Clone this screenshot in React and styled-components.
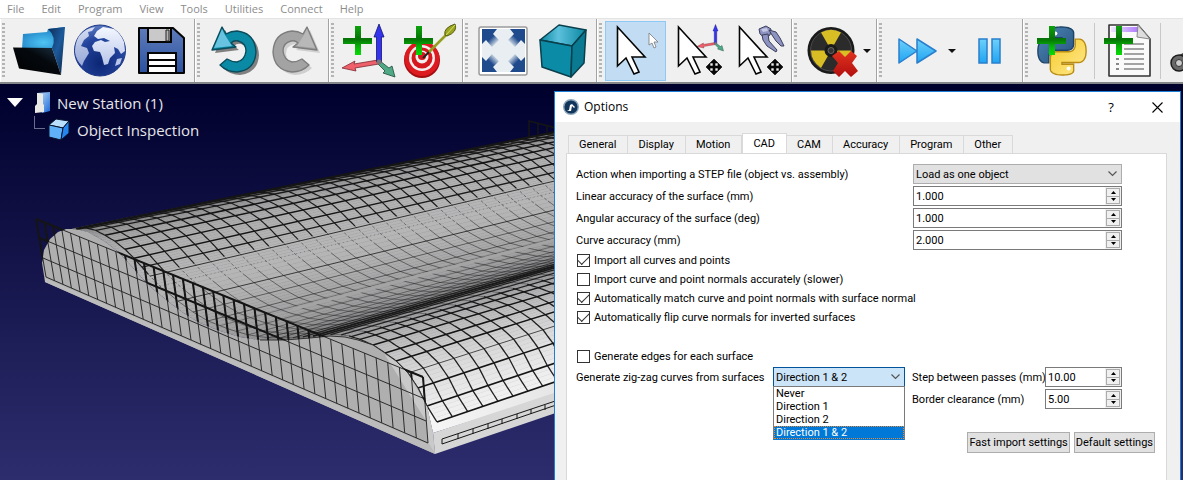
import React, { useId } from "react";
import styled, { createGlobalStyle, css } from "styled-components";

const MENU = [
  "File",
  "Edit",
  "Program",
  "View",
  "Tools",
  "Utilities",
  "Connect",
  "Help",
];

const TABS = [
  "General",
  "Display",
  "Motion",
  "CAD",
  "CAM",
  "Accuracy",
  "Program",
  "Other",
];

const DIRECTIONS = ["Never", "Direction 1", "Direction 2", "Direction 1 & 2"];

/* ---------- 3D view ---------- */

// near-end profile of the part: x, y, slope of the long edge, grey level
const PROFILE = [
  [72, 229, 0.198, 120],
  [80, 230, 0.2, 135],
  [88, 232, 0.203, 150],
  [97, 237, 0.208, 163],
  [107, 243, 0.213, 170],
  [117, 251, 0.22, 175],
  [126, 260, 0.225, 178],
  [134, 269, 0.23, 180],
  [142, 278, 0.235, 182],
  [152, 288, 0.238, 182],
  [170, 303, 0.242, 178],
  [185, 314, 0.25, 172],
  [200, 323, 0.257, 166],
  [220, 331, 0.265, 162],
  [240, 337, 0.272, 154],
  [260, 340, 0.28, 144],
  [285, 340, 0.288, 134],
  [310, 338, 0.29, 140],
  [330, 336, 0.29, 152],
  [345, 337, 0.29, 165],
  [358, 340, 0.29, 176],
  [373, 345, 0.295, 186],
  [385, 353, 0.305, 196],
  [396, 361, 0.31, 206],
  [408, 373, 0.32, 216],
  [418, 388, 0.33, 226],
  [427, 406, 0.335, 236],
  [437, 422, 0.34, 242],
];

const profileAt = (u) => {
  const i = Math.min(Math.floor(u), PROFILE.length - 2);
  const f = u - i;
  return PROFILE[i].map((a, k) => a + (PROFILE[i + 1][k] - a) * f);
};

const along = (u, d) => {
  const [x, y, s] = profileAt(u);
  return [x + d, y - s * d];
};

// the wires stop short of the edge, except on the near bump
const margin = (u) => Math.max(0, Math.min(8, (21 - u) * 2));

const toPath = (pts) =>
  "M" + pts.map(([x, y]) => `${x.toFixed(1)} ${y.toFixed(1)}`).join("L");

const LENGTH = 620;
const LAST = PROFILE.length - 1;

const STRIPS = [];
for (let u = 0; u < LAST; u += 0.25) {
  const g = Math.round(profileAt(u)[3]);
  STRIPS.push({
    d: toPath([
      along(u, 0),
      along(u, LENGTH),
      along(u + 0.25, LENGTH),
      along(u + 0.25, 0),
    ]),
    fill: `rgb(${g},${g},${g})`,
  });
}

const LONG_LINES = [
  [1, 1.4, 0.9],
  [2, 1.4, 0.95],
  [3, 1.5, 1],
  [4, 1.5, 1],
  [5, 1.4, 1],
  [6, 1.4, 1],
  [7, 1.3, 0.95],
  [8, 1, 0.8],
  [9, 1, 0.3],
  [10, 1, 0.75],
  [11, 1, 0.5],
  [12, 1, 0.5],
  [12.6, 1, 0.35],
  [13.4, 1, 0.4],
  [14, 1, 0.4],
  [14.5, 1, 0.4],
  [15, 1, 0.45],
  [15.5, 1, 0.55],
  [16, 1, 0.7],
  [16.4, 1.4, 0.85],
  [16.8, 2, 0.95],
  [17.2, 1.6, 0.95],
  [17.7, 1.2, 0.9],
  [18.4, 1.2, 0.9],
  [19.2, 1.3, 0.95],
  [20, 1.4, 1],
  [21, 1.5, 1],
  [22, 1.5, 1],
  [23, 1.5, 1],
  [24, 1, 0.7],
  [25, 1.5, 1],
  [26, 1.6, 1],
  [27, 1.6, 1],
].map(([u, w, o]) => ({
  d: toPath([along(u, margin(u)), along(u, LENGTH)]),
  w,
  o,
  dash: u === 9 ? "1 3" : undefined,
}));

const CROSS_SPANS = [
  { from: 0, to: 7.8, w: 1.2, o: 0.95 },
  { from: 7.8, to: 9.4, w: 1, o: 0.45, dash: "3 2" },
  { from: 9.4, to: 14, w: 1, o: 0.5 },
  { from: 14, to: 19, w: 1, o: 0.4 },
  { from: 19, to: 27, w: 1.3, o: 0.95 },
];

const CROSS_LINES = [];
for (let i = 0, d = 0; d < 500; i += 1, d += 15.5 - i * 0.1) {
  CROSS_SPANS.forEach((span) => {
    const pts = [];
    for (let u = span.from; u <= span.to + 0.01; u += 0.2) {
      pts.push(along(Math.min(u, LAST), d + margin(u)));
    }
    CROSS_LINES.push({ ...span, d: toPath(pts) });
  });
}

const FACE_EDGE = [[45, 282], [42, 263], [44, 250], [50, 239], [58, 232], [66, 229]].concat(
  PROFILE.slice(0, 27).map(([x, y]) => [x, y])
);
const FACE = toPath([...FACE_EDGE, [433, 433], [435, 454]]) + "Z";
const ABOVE_FACE = toPath([...FACE_EDGE, [430, 430], [440, 430], [440, 180], [20, 180], [20, 282]]) + "Z";

const FENCE = [];
for (let i = 0; i <= 38; i += 1) {
  const t = i / 38;
  const f = t * 0.83 + t * t * 0.17;
  FENCE.push(toPath([[36 + 387 * f, 219 + 158 * f], [46 + 382 * f, 277 + 166 * f]]));
}
FENCE.push("M36 219L423 377", "M40 238L425 399", "M43 258L426 421", "M46 277L428 443");

const Fence = ({ width, opacity, clip }) => (
  <g stroke="#151515" strokeWidth={width} opacity={opacity} clipPath={clip} fill="none">
    {FENCE.map((d) => (
      <path key={d} d={d} />
    ))}
  </g>
);

const PartView = () => (
  <Scene aria-hidden="true">
    <defs>
      <clipPath id="above-face">
        <path d={ABOVE_FACE} />
      </clipPath>
      <linearGradient id="bevel" x1="0" y1="0" x2="1" y2="0">
        <stop offset="0" stopColor="#f6f6f6" />
        <stop offset="1" stopColor="#dedede" />
      </linearGradient>
    </defs>
    <g transform="translate(0 -84)">
      <path d="M425 398L437 418L620 356V374L433 433Z" fill="url(#bevel)" />
      <path d="M433 433L620 371V391L435 454Z" fill="#d6d6d6" />
      {STRIPS.map((s) => (
        <path key={s.d} d={s.d} fill={s.fill} stroke={s.fill} strokeWidth="0.6" />
      ))}
      <g fill="none" stroke="#151515">
        {LONG_LINES.map((l) => (
          <path key={l.d} d={l.d} strokeWidth={l.w} opacity={l.o} strokeDasharray={l.dash} />
        ))}
        {CROSS_LINES.map((l) => (
          <path key={l.d} d={l.d} strokeWidth={l.w} opacity={l.o} strokeDasharray={l.dash} />
        ))}
        <path d="M293 309L600 228" stroke="#a4a4a4" strokeWidth="3" />
        <path d="M76 229L600 123" strokeWidth="2.4" />
        <path d="M529 136V121L560 129M538 134V123M547 132V126" strokeWidth="1.6" />
        <path d="M442 439L600 386M442 444L600 390M442 439V444M458 434V439M473 429V434M488 424V429M502 419V424M517 414V419M531 409V414M545 405V410" />
      </g>
      <path d={FACE} fill="#afafaf" />
      <path d="M385 355L396 361L408 373L427 406L433 433L435 454L428 443L426 421Z" fill="#c9c9c9" />
      <path d="M45 278L430 445L435 454L45 282Z" fill="#bcbcbc" />
      <path d={toPath(PROFILE.slice(15, 27))} fill="none" stroke="#333" />
      <Fence width={1} opacity={0.85} />
      <Fence width={2} opacity={1} clip="url(#above-face)" />
    </g>
  </Scene>
);

/* ---------- toolbar icons, drawn on a 56px box ---------- */

const Icon = ({ children }) => (
  <svg width="56" height="56" viewBox="0 0 56 56" aria-hidden="true">
    {children}
  </svg>
);

const Plus = () => (
  <path d="M15 3H21V15H32V21H21V32H15V21H3V15H15Z" fill="url(#plus)" />
);

const IconDefs = () => (
  <HiddenSvg aria-hidden="true">
    <defs>
      <linearGradient id="plus" x1="0" y1="0" x2="0" y2="1">
        <stop offset="0" stopColor="#0da30d" />
        <stop offset="0.45" stopColor="#067206" />
        <stop offset="0.7" stopColor="#08b008" />
        <stop offset="1" stopColor="#06dc06" />
      </linearGradient>
      <linearGradient id="folder-back" x1="0" y1="0" x2="1" y2="1">
        <stop offset="0" stopColor="#0c2c55" />
        <stop offset="0.5" stopColor="#1c5a9c" />
        <stop offset="1" stopColor="#0b2244" />
      </linearGradient>
      <radialGradient id="folder-page" cx="0.5" cy="0.7" r="0.7">
        <stop offset="0" stopColor="#4fc4f4" />
        <stop offset="1" stopColor="#1c7cc0" />
      </radialGradient>
      <linearGradient id="folder-front" x1="1" y1="0" x2="0" y2="1">
        <stop offset="0" stopColor="#1d3548" />
        <stop offset="0.4" stopColor="#05090e" />
        <stop offset="1" stopColor="#000" />
      </linearGradient>
      <radialGradient id="globe" cx="0.5" cy="0.75" r="0.8">
        <stop offset="0" stopColor="#0c2674" />
        <stop offset="0.6" stopColor="#24459e" />
        <stop offset="1" stopColor="#6784c9" />
      </radialGradient>
      <linearGradient id="land" x1="0" y1="0" x2="0" y2="1">
        <stop offset="0" stopColor="#f4f7ff" />
        <stop offset="1" stopColor="#b9c6ea" />
      </linearGradient>
      <linearGradient id="floppy" x1="0" y1="0" x2="0" y2="1">
        <stop offset="0" stopColor="#5f7cba" />
        <stop offset="1" stopColor="#2b52a0" />
      </linearGradient>
      <linearGradient id="fit-tail" gradientUnits="userSpaceOnUse" x1="12" y1="10" x2="23" y2="21">
        <stop offset="0" stopColor="#1f4a8c" />
        <stop offset="0.45" stopColor="#1f4a8c" />
        <stop offset="1" stopColor="#1f4a8c" stopOpacity="0" />
      </linearGradient>
      <linearGradient id="cube-top" x1="0" y1="0" x2="1" y2="0">
        <stop offset="0" stopColor="#0a87a1" />
        <stop offset="0.4" stopColor="#5cc0dc" />
        <stop offset="1" stopColor="#0a87a1" />
      </linearGradient>
      <linearGradient id="play" x1="0" y1="0" x2="0" y2="1">
        <stop offset="0" stopColor="#6fd0fa" />
        <stop offset="1" stopColor="#1ea4f2" />
      </linearGradient>
      <linearGradient id="red-x" x1="0" y1="0" x2="0" y2="1">
        <stop offset="0" stopColor="#e0331f" />
        <stop offset="1" stopColor="#b30f0f" />
      </linearGradient>
      <linearGradient id="py-blue" x1="0" y1="0" x2="1" y2="1">
        <stop offset="0" stopColor="#4d86b6" />
        <stop offset="1" stopColor="#27527d" />
      </linearGradient>
      <linearGradient id="py-yellow" x1="0" y1="0" x2="1" y2="1">
        <stop offset="0" stopColor="#ffe98f" />
        <stop offset="1" stopColor="#f6cb2c" />
      </linearGradient>
      <linearGradient id="door" x1="0" y1="0" x2="1" y2="1">
        <stop offset="0" stopColor="#c9e5fb" />
        <stop offset="1" stopColor="#1b68d8" />
      </linearGradient>
      <linearGradient id="doc-head" x1="0" y1="0" x2="1" y2="0">
        <stop offset="0" stopColor="#efe6ff" />
        <stop offset="1" stopColor="#b07bff" />
      </linearGradient>
    </defs>
  </HiddenSvg>
);

const FolderIcon = () => (
  <Icon>
    <path d="M12 11L36 9L37 6L54 4L46 26H11Z" fill="url(#folder-page)" />
    <path d="M37 6L54 4L50 52L41 25Q46 14 37 6Z" fill="url(#folder-back)" />
    <path d="M2 24.5L41 25L50 52L8 45.5Z" fill="url(#folder-front)" />
  </Icon>
);

const GlobeIcon = () => (
  <Icon>
    <circle cx="28" cy="27.500" r="25.500" fill="url(#globe)" stroke="#1b3684" />
    <path
      d="M7 13Q14 5 23 4L20 8L16 9L17 13L12 17L9 23L15 25L17 30L12 38L10 43Q4 37 3 29Q3 20 7 13Z"
      fill="url(#land)"
      opacity="0.8"
    />
    <path
      d="M22 13L25 8L31 4L42 6Q49 11 52 19L53 28L49 31L46 26L42 24L43 30L38 35L36 41L32 42L30 34L28 29L22 28L20 23L23 19L29 17L33 19L38 18L32 15L26 16Z"
      fill="url(#land)"
    />
    <path d="M45 36L50 35L48 41L43 43Z" fill="#b9c6ea" />
  </Icon>
);

const SaveIcon = () => (
  <Icon>
    <path d="M6 5H40L51 15V50H6Z" fill="url(#floppy)" stroke="#050505" strokeWidth="2" strokeLinejoin="round" />
    <path d="M15 5H38V19H15Z" fill="#c9c9c9" stroke="#050505" strokeWidth="2" />
    <path d="M33 7H36V18H33Z" fill="#b5b5b5" stroke="#222" />
    <path d="M15 30H43V50H15Z" fill="#fff" stroke="#050505" strokeWidth="2" />
    <path d="M15 37H43M15 43H43" stroke="#050505" strokeWidth="2" />
  </Icon>
);

const TURN =
  "M16 4L6 27L30 24L25 20Q28 17 32 18Q40 20 40 28Q39 37 31 39Q26 39 21 36L14 42Q21 49 31 49Q49 47 50 29Q49 10 31 8Q25 8 20 11Z";

const TurnIcon = ({ redo }) => (
  <Icon>
    <g transform={redo ? "translate(56 0) scale(-1 1)" : undefined}>
      <path d={TURN} transform={redo ? "translate(-3 3)" : "translate(3 3)"} fill={redo ? "#cfcfcf" : "#808080"} />
      <path
        d={TURN}
        fill={redo ? "#a3a3a3" : "#0a8aa4"}
        stroke={redo ? "#7d7d7d" : "#0a4c5c"}
        strokeWidth="1.400"
        strokeLinejoin="round"
      />
      <path d="M16 6L8 25L26 23L19 12Z" fill={redo ? "#c0c0c0" : "#8edcf8"} opacity="0.7" />
    </g>
  </Icon>
);

const Axes = () => (
  <g strokeLinejoin="round">
    <path d="M38 37L14 41L15 38L2 45L16 48L15 45L39 41Z" fill="#f0606a" stroke="#7c2832" strokeWidth="0.800" />
    <path d="M38 41L45 48L43 50L55 54L52 43L49 45L40 38Z" fill="#4fa886" stroke="#1d4d3a" strokeWidth="0.800" />
    <path d="M36.500 39V14H34L39 1L44 14H41.500V39Z" fill="#3434ee" stroke="#14146e" strokeWidth="0.800" />
    <circle cx="39" cy="39" r="2.500" fill="#777" />
  </g>
);

const AxesIcon = () => (
  <Icon>
    <Axes />
    <Plus />
  </Icon>
);

const TargetIcon = () => (
  <Icon>
    <circle cx="21" cy="37" r="18" fill="#a30c10" />
    <circle cx="21" cy="35.500" r="17.500" fill="#dd1a1f" />
    <circle cx="21" cy="35" r="13" fill="#f3eeee" />
    <circle cx="21" cy="35" r="10.500" fill="#d5181d" />
    <circle cx="21" cy="34" r="6.500" fill="#f3eeee" />
    <circle cx="21" cy="33" r="4" fill="#d5181d" />
    <Plus />
    <path d="M22 35L30 27" stroke="#222" strokeWidth="2" />
    <path d="M28 29L46 11" stroke="#93a01f" strokeWidth="2.500" />
    <path d="M44 12Q42 5 54 1Q57 9 46 13Z" fill="#9aa51d" stroke="#525b0c" />
    <path d="M45 12L54 2" stroke="#d7df77" />
  </Icon>
);

const FIT_CORNERS = [
  undefined,
  "translate(59 0) scale(-1 1)",
  "translate(0 55) scale(1 -1)",
  "translate(59 55) scale(-1 -1)",
];

const FitIcon = () => (
  <Icon>
    <rect x="5" y="4" width="48" height="48" rx="2" fill="#fff" stroke="#9a9a9a" strokeWidth="1.500" />
    <rect x="8" y="6" width="43" height="43" fill="#e8eef1" />
    {FIT_CORNERS.map((t, i) => (
      <path key={i} d="M8 6H23L19 11L25 17L18 24L12 17L8 21Z" transform={t} fill="url(#fit-tail)" />
    ))}
  </Icon>
);

const CubeIcon = () => (
  <Icon>
    <g stroke="#0a3f4c" strokeWidth="1.500" strokeLinejoin="round">
      <path d="M5 17L24 2L51 7L37 23Z" fill="url(#cube-top)" />
      <path d="M5 17L37 23L36 54L7 44Z" fill="#0b8ba6" />
      <path d="M37 23L51 7L49 40L36 54Z" fill="#0a7a92" />
    </g>
  </Icon>
);

const Arrow = () => (
  <path
    d="M9.500 4V43L18 35L26 51L31 49L24 34H37Z"
    fill="#fff"
    stroke="#050505"
    strokeWidth="1.600"
  />
);

const MoveCross = () => (
  <path
    d="M45 36L49 40H46V43H49V40L53 44L49 48V45H46V48H49L45 52L41 48H44V45H41V48L37 44L41 40V43H44V40H41Z"
    fill="#080808"
    stroke="#080808"
    strokeWidth="0.600"
  />
);

const SelectIcon = () => (
  <Icon>
    <Arrow />
    <path d="M41 10V22L44 20L46 25L48 24L46 19H50Z" fill="#fff" stroke="#777" strokeWidth="0.800" />
  </Icon>
);

const MoveFrameIcon = () => (
  <Icon>
    <g transform="translate(27 1) scale(0.5)">
      <Axes />
    </g>
    <Arrow />
    <MoveCross />
  </Icon>
);

const MoveToolIcon = () => (
  <Icon>
    <g fill="#8d93c0" stroke="#3c3f5c" strokeLinejoin="round">
      <path d="M29 6L36 3L41 6L40 12L35 15L30 11Z" />
      <path d="M39 7L46 9L50 15L54 23L51 23L46 18L42 12Z" />
      <path d="M32 12L38 11L39 18L47 27L46 29L37 23L33 17Z" />
    </g>
    <path d="M31 6L37 5L38 8L33 9Z" fill="#c4c8e4" />
    <Arrow />
    <MoveCross />
  </Icon>
);

const NuclearIcon = () => (
  <Icon>
    <circle cx="28" cy="27.500" r="23.500" fill="#1a1a1a" />
    <circle cx="28" cy="27.500" r="20.500" fill="#2b2b2b" stroke="#555" strokeWidth="0.800" />
    <path
      d="M28 27L18 9.500Q28 4 38 9.500ZM28 27.500H48Q48 38 38 45ZM28 27.500H8Q8 38 18 45Z"
      fill="#d8bd25"
    />
    <circle cx="28" cy="27.500" r="6.500" fill="#1a1a1a" />
    <circle cx="28" cy="27.500" r="3" fill="#333" stroke="#666" />
    <path
      d="M29 33L36 28L42 34L48 28L54 33L49 40L55 48L48 54L42 48L36 54L30 48L35 40Z"
      fill="url(#red-x)"
    />
  </Icon>
);

const ForwardIcon = () => (
  <Icon>
    <path
      d="M11 16L29 28L11 40ZM29 16L48 28L29 40Z"
      fill="url(#play)"
      stroke="#2a7fcc"
      strokeWidth="1.500"
      strokeLinejoin="round"
    />
  </Icon>
);

const PauseIcon = () => (
  <Icon>
    <path
      d="M18 16H26V40H18ZM31 16H39V40H31Z"
      fill="url(#play)"
      stroke="#2a7fcc"
      strokeWidth="1.500"
    />
  </Icon>
);

const SNAKE =
  "M14.25.18l.9.2.73.26.59.3.45.32.34.34.25.34.16.33.1.3.04.26.02.2-.01.13V8.5l-.05.63-.13.55-.21.46-.26.38-.3.31-.33.25-.35.19-.35.14-.33.1-.3.07-.26.04-.21.02H8.77l-.69.05-.59.14-.5.22-.41.27-.33.32-.27.35-.2.36-.15.37-.1.35-.07.32-.04.27-.02.21v3.06H3.17l-.21-.03-.28-.07-.32-.12-.35-.18-.36-.26-.36-.36-.35-.46-.32-.59-.28-.73-.21-.88-.14-1.05-.05-1.23.06-1.22.16-1.04.24-.87.32-.71.36-.57.4-.44.42-.33.42-.24.4-.16.36-.1.32-.05.24-.01h.16l.06.01h8.16v-.83H6.18l-.01-2.75-.02-.37.05-.34.11-.31.17-.28.25-.26.31-.23.38-.2.44-.18.51-.15.58-.12.64-.1.71-.06.77-.04.84-.02 1.27.05z";

const PythonIcon = () => (
  <Icon>
    <g transform="translate(4 4) scale(2)" strokeWidth="0.700">
      <path d={SNAKE} fill="url(#py-blue)" stroke="#1d4468" />
      <path d={SNAKE} transform="rotate(180 12 12)" fill="url(#py-yellow)" stroke="#b98d13" />
      <circle cx="8.700" cy="3.300" r="1" fill="#fff" />
      <circle cx="15.300" cy="20.700" r="1" fill="#fff" />
    </g>
    <Plus />
  </Icon>
);

const DocIcon = () => (
  <Icon>
    <path d="M9 2H38L50 16V53H9Z" fill="#fafafa" stroke="#333" strokeWidth="1.600" strokeLinejoin="round" />
    <path d="M11 4H38V9H11Z" fill="url(#doc-head)" />
    <path d="M38 2L50 16L37 14Z" fill="#ddd" stroke="#888" />
    <path d="M24 21H44M24 26H44M24 31H44M24 36H44M24 41H44M24 46H44" stroke="#a3a3a3" strokeWidth="2" />
    <path d="M16 36H19M16 41H19M16 46H19" stroke="#888" strokeWidth="2" />
    <g transform="translate(1 0)">
      <Plus />
    </g>
  </Icon>
);

const RobotIcon = () => (
  <Icon>
    <path d="M10 34L22 27L40 30V42H18Z" fill="#3d3d3d" />
    <path d="M16 33L22 25L40 27V33Z" fill="#b5b51c" />
    <circle cx="13" cy="40" r="8" fill="#686868" stroke="#1c1c1c" strokeWidth="1.500" />
    <circle cx="13" cy="40" r="3.500" fill="#ccc" stroke="#333" />
  </Icon>
);

/* ---------- controls ---------- */

const Chevron = () => (
  <svg width="9" height="6" viewBox="0 0 9 6" aria-hidden="true">
    <path d="M0.500 0.500L4.500 4.500L8.500 0.500" fill="none" stroke="#555" strokeWidth="1.200" />
  </svg>
);

const Tri = ({ up }) => (
  <svg width="5" height="3" viewBox="0 0 5 3" aria-hidden="true">
    <path d={up ? "M0 3H5L2.500 0Z" : "M0 0H5L2.500 3Z"} fill="#000" />
  </svg>
);

const SpinBox = ({ id, value, label }) => (
  <SpinFrame>
    <SpinInput id={id} type="text" inputMode="decimal" defaultValue={value} />
    <SpinButtons>
      <SpinButton type="button" aria-label={`Increase ${label}`}>
        <Tri up />
      </SpinButton>
      <SpinButton type="button" aria-label={`Decrease ${label}`}>
        <Tri />
      </SpinButton>
    </SpinButtons>
  </SpinFrame>
);

const NumberRow = ({ label, value }) => {
  const id = useId();
  return (
    <>
      <Label htmlFor={id}>{label}</Label>
      <SpinBox id={id} value={value} label={label} />
    </>
  );
};

const CheckRow = ({ label, checked }) => (
  <CheckLabel>
    <CheckBox type="checkbox" defaultChecked={checked} />
    {label}
  </CheckLabel>
);

const Tool = ({ label, active, children }) => (
  <ToolButton type="button" aria-label={label} $active={active}>
    {children}
  </ToolButton>
);

const DropArrow = ({ label }) => (
  <DropButton type="button" aria-label={label}>
    <svg width="8" height="4" viewBox="0 0 8 4" aria-hidden="true">
      <path d="M0 0H8L4 4Z" fill="#111" />
    </svg>
  </DropButton>
);

const OptionsDialog = () => (
  <Dialog role="dialog" aria-label="Options">
    <TitleBar>
      <svg width="16" height="16" viewBox="0 0 16 16" aria-hidden="true">
        <circle cx="8" cy="8" r="7.300" fill="#12355c" stroke="#8ba6bb" strokeWidth="1.400" />
        <path d="M4 12L6 11L7 6L9 5L12 8L11 9L9 7L8 12Z" fill="#fff" />
      </svg>
      <Title>Options</Title>
      <TitleButton type="button" aria-label="Help">
        ?
      </TitleButton>
      <TitleButton type="button" aria-label="Close">
        <svg width="11" height="11" viewBox="0 0 11 11" aria-hidden="true">
          <path d="M0.500 0.500L10.500 10.500M10.500 0.500L0.500 10.500" stroke="#000" strokeWidth="1.100" />
        </svg>
      </TitleButton>
    </TitleBar>
    <DialogBody>
      <TabList role="tablist">
        {TABS.map((t) => (
          <Tab key={t} type="button" role="tab" aria-selected={t === "CAD"} $active={t === "CAD"}>
            {t}
          </Tab>
        ))}
      </TabList>
      <Panel role="tabpanel">
        <FormGrid>
          <Label htmlFor="step-import">
            Action when importing a STEP file (object vs. assembly)
          </Label>
          <SelectFrame>
            <Select id="step-import" defaultValue="one">
              <option value="one">Load as one object</option>
            </Select>
            <Chevron />
          </SelectFrame>
          <NumberRow label="Linear accuracy of the surface (mm)" value="1.000" />
          <NumberRow label="Angular accuracy of the surface (deg)" value="1.000" />
          <NumberRow label="Curve accuracy (mm)" value="2.000" />
        </FormGrid>
        <CheckList>
          <CheckRow label="Import all curves and points" checked />
          <CheckRow label="Import curve and point normals accurately (slower)" />
          <CheckRow label="Automatically match curve and point normals with surface normal" checked />
          <CheckRow label="Automatically flip curve normals for inverted surfaces" checked />
        </CheckList>
        <CheckRow label="Generate edges for each surface" />
        <CurveRow>
          <Label htmlFor="zigzag">Generate zig-zag curves from surfaces</Label>
          <SelectFrame $open>
            <Select id="zigzag" defaultValue="Direction 1 & 2">
              {DIRECTIONS.map((d) => (
                <option key={d}>{d}</option>
              ))}
            </Select>
            <Chevron />
            <DropList role="listbox" aria-label="Directions">
              {DIRECTIONS.map((d, i) => (
                <DropItem key={d} role="option" aria-selected={i === 3} $selected={i === 3}>
                  {d}
                </DropItem>
              ))}
            </DropList>
          </SelectFrame>
          <StepGrid>
            <NumberRow label="Step between passes (mm)" value="10.00" />
            <NumberRow label="Border clearance (mm)" value="5.00" />
          </StepGrid>
        </CurveRow>
        <Actions>
          <PushButton type="button">Fast import settings</PushButton>
          <PushButton type="button">Default settings</PushButton>
        </Actions>
      </Panel>
    </DialogBody>
  </Dialog>
);

export default function App() {
  return (
    <Window>
      <GlobalStyle />
      <IconDefs />
      <MenuBar>
        {MENU.map((m) => (
          <MenuItem key={m} type="button">
            {m}
          </MenuItem>
        ))}
      </MenuBar>
      <ToolBar>
        <Group>
          <Tool label="Open"><FolderIcon /></Tool>
          <Tool label="Online library"><GlobeIcon /></Tool>
          <Tool label="Save"><SaveIcon /></Tool>
        </Group>
        <Group>
          <Tool label="Undo"><TurnIcon /></Tool>
          <Tool label="Redo"><TurnIcon redo /></Tool>
        </Group>
        <Group>
          <Tool label="Add frame"><AxesIcon /></Tool>
          <Tool label="Add target"><TargetIcon /></Tool>
        </Group>
        <Group>
          <Tool label="Fit all"><FitIcon /></Tool>
          <Tool label="Isometric view"><CubeIcon /></Tool>
        </Group>
        <Group>
          <Tool label="Select" active><SelectIcon /></Tool>
          <Tool label="Move frame"><MoveFrameIcon /></Tool>
          <Tool label="Move tool"><MoveToolIcon /></Tool>
        </Group>
        <Group>
          <Tool label="Check collisions"><NuclearIcon /></Tool>
          <DropArrow label="Collision options" />
        </Group>
        <Group>
          <Tool label="Fast simulation"><ForwardIcon /></Tool>
          <DropArrow label="Simulation speed" />
          <Tool label="Pause"><PauseIcon /></Tool>
        </Group>
        <Group>
          <Tool label="Add Python program"><PythonIcon /></Tool>
          <Divider />
          <Tool label="Add program"><DocIcon /></Tool>
          <Divider />
          <Tool label="Robot"><RobotIcon /></Tool>
        </Group>
      </ToolBar>
      <Viewport>
        <PartView />
        <Tree>
          <TreeRow>
            <svg width="16" height="9" viewBox="0 0 16 9" aria-hidden="true">
              <path d="M0 0H16L8 9Z" fill="#fff" />
            </svg>
            <StationMark width="16" height="22" viewBox="0 0 16 22" aria-hidden="true">
              <path d="M2 1L15 0V19L7 21Z" fill="url(#door)" />
              <path d="M2 1L8 2V12L9 13V20L0 21V14L2 12Z" fill="#e9e9e6" />
            </StationMark>
            New Station (1)
          </TreeRow>
          <TreeRow $child>
            <Branch />
            <svg width="24" height="24" viewBox="0 0 24 24" aria-hidden="true">
              <g stroke="#08142e" strokeLinejoin="round">
                <path d="M2 7L9 1L22 3L16 10Z" fill="#b9e0ff" />
                <path d="M2 7L16 10L14 22L2 19Z" fill="#5fb2f9" />
                <path d="M16 10L22 3L22 15L14 22Z" fill="#2486ee" />
              </g>
            </svg>
            Object Inspection
          </TreeRow>
        </Tree>
        <OptionsDialog />
      </Viewport>
    </Window>
  );
}

/* ---------- styles ---------- */

const uiFont = css`
  font-family: "Open Sans", "Noto Sans", sans-serif;
`;

const formFont = css`
  font-family: Roboto, "Liberation Sans", sans-serif;
  font-size: 11px;
  line-height: 13px;
  color: #000;
`;

const GlobalStyle = createGlobalStyle`
  * {
    box-sizing: border-box;
  }

  body {
    margin: 0;
    overflow: hidden;
    background: #f0f0f0;
  }

  button {
    margin: 0;
    padding: 0;
    border: 0;
    background: none;
  }

  svg {
    display: block;
    flex: none;
  }
`;

const Window = styled.div`
  display: flex;
  flex-direction: column;
  height: 100vh;
  ${uiFont}
`;

const HiddenSvg = styled.svg`
  position: absolute;
  width: 0;
  height: 0;
`;

const MenuBar = styled.nav`
  display: flex;
  gap: 17px;
  height: 18px;
  padding: 0 7px;
  background: #fff;
`;

const MenuItem = styled.button`
  ${uiFont}
  font-size: 11px;
  line-height: 18px;
  color: #8c8c8c;
`;

const ToolBar = styled.div`
  display: flex;
  flex: none;
  height: 66px;
  overflow: hidden;
  background: #f0f0f0;
  border-top: 1px solid #e4e4e4;
  border-bottom: 2px solid #85868a;
`;

const Group = styled.div`
  display: flex;
  flex: none;
  align-items: center;
  padding: 0 3px 0 0;
  border-left: 1px solid #fff;
  border-right: 1px solid #a3a3a3;

  &::before {
    content: "";
    width: 3px;
    height: 56px;
    margin: 0 3px 0 1px;
    background: repeating-linear-gradient(#b4b4b4 0 2px, transparent 2px 4px);
  }

  &:last-child {
    border-right: 0;
  }
`;

const ToolButton = styled.button`
  display: flex;
  align-items: center;
  justify-content: center;
  width: 61px;
  height: 60px;
  border: 1px solid ${(p) => (p.$active ? "#8fc8f2" : "transparent")};
  background: ${(p) => (p.$active ? "#c2ddf3" : "transparent")};
`;

const DropButton = styled.button`
  display: flex;
  align-items: center;
  justify-content: center;
  width: 12px;
  height: 60px;
`;

const Divider = styled.div`
  width: 1px;
  height: 56px;
  margin: 0 2px;
  background: #c8c8c8;
`;

const Viewport = styled.main`
  position: relative;
  flex: 1;
  overflow: hidden;
  background: linear-gradient(#00002d, #2d2d6e);
`;

const Scene = styled.svg`
  position: absolute;
  inset: 0;
  width: 100%;
  height: 100%;
`;

const Tree = styled.div`
  position: relative;
  display: flex;
  flex-direction: column;
  padding: 5px 7px;
  font-size: 15px;
  color: #e6e6ea;
`;

const TreeRow = styled.div`
  display: flex;
  align-items: center;
  gap: 6px;
  height: 27px;
  padding-left: ${(p) => (p.$child ? "27px" : 0)};
`;

const StationMark = styled.svg`
  margin-left: 6px;
`;

const Branch = styled.span`
  align-self: flex-start;
  width: 11px;
  height: 13px;
  margin-right: -4px;
  border: solid #6b6b8c;
  border-width: 0 0 1px 1px;
`;

const Dialog = styled.section`
  position: absolute;
  top: 7px;
  left: 554px;
  right: 2px;
  bottom: -16px;
  display: flex;
  flex-direction: column;
  background: #f0f0f0;
  border: 1px solid #1a7fd4;
`;

const TitleBar = styled.header`
  display: flex;
  align-items: center;
  height: 30px;
  padding-left: 8px;
  background: #fff;
`;

const Title = styled.h1`
  flex: 1;
  margin: 0;
  padding-left: 5px;
  font-size: 12px;
  font-weight: 400;
  line-height: 18px;
  color: #000;
`;

const TitleButton = styled.button`
  ${uiFont}
  display: flex;
  align-items: center;
  justify-content: center;
  width: 46px;
  height: 30px;
  font-size: 13px;
  color: #000;
`;

const DialogBody = styled.div`
  display: flex;
  flex: 1;
  flex-direction: column;
  padding: 11px 13px 0 11px;
`;

const TabList = styled.div`
  display: flex;
  align-items: flex-end;
  height: 21px;
  padding-left: 2px;
  margin-bottom: -1px;
`;

const Tab = styled.button`
  ${formFont}
  height: ${(p) => (p.$active ? "21px" : "19px")};
  padding: 0 11px 0 10px;
  background: ${(p) => (p.$active ? "#fff" : "#f0f0f0")};
  border: 1px solid #d9d9d9;
  border-left-width: ${(p) => (p.$active ? "1px" : 0)};
  border-bottom-color: ${(p) => (p.$active ? "#fff" : "#d9d9d9")};

  &:first-child {
    border-left-width: 1px;
  }
`;

const Panel = styled.div`
  ${formFont}
  display: flex;
  flex: 1;
  flex-direction: column;
  padding: 10px 11px 0 9px;
  background: #fff;
  border: 1px solid #d9d9d9;
`;

const FormGrid = styled.div`
  display: grid;
  grid-template-columns: 337px 209px;
  grid-auto-rows: 20px;
  row-gap: 2px;
`;

const Label = styled.label`
  line-height: 22px;
  white-space: nowrap;
`;

const frame = css`
  border: 1px solid #7a7a7a;
  background: #fff;
`;

const SelectFrame = styled.div`
  position: relative;
  display: flex;
  align-items: center;
  height: 20px;
  padding-right: 4px;
  border: 1px solid ${(p) => (p.$open ? "#00549e" : "#adadad")};
  background: ${(p) => (p.$open ? "#cce4f7" : "#e1e1e1")};
`;

const Select = styled.select`
  ${formFont}
  flex: 1;
  min-width: 0;
  height: 18px;
  padding: 1px 2px 0;
  appearance: none;
  background: transparent;
  border: 0;
`;

const DropList = styled.ul`
  position: absolute;
  top: 18px;
  left: -1px;
  right: -1px;
  z-index: 1;
  margin: 0;
  padding: 0;
  list-style: none;
  ${frame}
  border-bottom-color: #0078d7;
`;

const DropItem = styled.li`
  height: 13px;
  padding: 0 2px;
  color: ${(p) => (p.$selected ? "#fff" : "#000")};
  background: ${(p) => (p.$selected ? "#0078d7" : "#fff")};
  outline: ${(p) => (p.$selected ? "1px dotted #e08a3c" : "none")};
  outline-offset: -1px;
`;

const SpinFrame = styled.div`
  display: flex;
  height: 20px;
  ${frame}
`;

const SpinInput = styled.input`
  ${formFont}
  flex: 1;
  min-width: 0;
  height: 18px;
  padding: 1px 2px 0;
  background: transparent;
  border: 0;
`;

const SpinButtons = styled.div`
  display: flex;
  flex-direction: column;
  width: 16px;
  padding: 1px;
  background: #f0f0f0;
`;

const SpinButton = styled.button`
  display: flex;
  flex: 1;
  align-items: center;
  justify-content: center;
  border: 1px solid #acacac;
  background: #f0f0f0;

  & + & {
    border-top: 0;
  }
`;

const CheckList = styled.div`
  display: flex;
  flex-direction: column;
  gap: 2px;
  padding: 2px 0 22px;
`;

const CheckLabel = styled.label`
  display: flex;
  align-items: center;
  gap: 4px;
  height: 17px;
  padding-left: 1px;
`;

const CheckBox = styled.input`
  appearance: none;
  flex: none;
  display: grid;
  place-items: center;
  width: 13px;
  height: 13px;
  margin: 0;
  border: 1px solid #333;
  background: #fff;

  &:checked::before {
    content: "";
    width: 10px;
    height: 5px;
    margin-top: -3px;
    border: solid #333;
    border-width: 0 0 1px 1px;
    transform: rotate(-45deg);
  }
`;

const CurveRow = styled.div`
  display: grid;
  grid-template-columns: 197px 132px auto;
  padding-top: 2px;
`;

const StepGrid = styled.div`
  display: grid;
  grid-template-columns: 133px 77px;
  grid-auto-rows: 20px;
  row-gap: 2px;
  padding-left: 7px;
`;

const Actions = styled.div`
  display: flex;
  justify-content: flex-end;
  gap: 4px;
  padding-top: 23px;
`;

const PushButton = styled.button`
  ${formFont}
  height: 21px;
  padding: 0 1px;
  border: 1px solid #adadad;
  background: #e1e1e1;
`;
